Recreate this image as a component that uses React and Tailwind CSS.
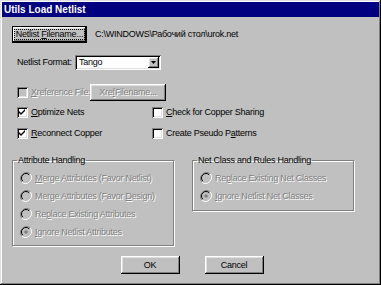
import React from 'react';

const raised = 'shadow-[inset_-1px_-1px_0_#000,inset_1px_1px_0_#fff,inset_-2px_-2px_0_#808080,inset_2px_2px_0_#dfdfdf]';
const sunken = 'shadow-[inset_1px_1px_0_#808080,inset_-1px_-1px_0_#fff,inset_2px_2px_0_#000,inset_-2px_-2px_0_#dfdfdf]';
const etched = 'text-[#808080] [text-shadow:1px_1px_0_#ffffff]';

const U = ({ children }) => <span className="underline underline-offset-[1px]">{children}</span>;

const CheckBox = ({ checked, disabled }) => (
    <span className={`w-[11px] h-[11px] shrink-0 flex items-center justify-center ${sunken} ${disabled ? 'bg-[#c0c0c0]' : 'bg-white'}`}>
        {checked && (
            <svg width="7" height="7" viewBox="0 0 7 7">
                <path d="M0 2 L2 4 L6 0 L6 2 L2 6 L0 4 Z" fill="#000" />
            </svg>
        )}
    </span>
);

const Radio = ({ checked }) => (
    <svg width="12" height="12" viewBox="0 0 12 12" className="shrink-0">
        <path d="M10.2 1.8 A6 6 0 0 0 1.8 10.2" fill="none" stroke="#808080" strokeWidth="1" />
        <path d="M1.8 10.2 A6 6 0 0 0 10.2 1.8" fill="none" stroke="#ffffff" strokeWidth="1" />
        <circle cx="6" cy="6" r="4.5" fill="#c0c0c0" />
        <path d="M9.2 2.8 A4.5 4.5 0 0 0 2.8 9.2" fill="none" stroke="#000" strokeWidth="1" />
        {checked && <circle cx="6" cy="6" r="1.8" fill="#808080" />}
    </svg>
);

const Button = ({ children, className = '', disabled }) => (
    <div className={`flex items-center justify-center bg-[#c0c0c0] ${raised} ${disabled ? etched : 'text-black'} ${className}`}>
        {children}
    </div>
);

const Group = ({ title, className = '', children }) => (
    <fieldset className={`border border-[#808080] shadow-[1px_1px_0_#fff,inset_1px_1px_0_#fff] ${className}`}>
        <legend className="ml-[4px] px-[1px] text-black leading-[10px]">{title}</legend>
        <div className="flex flex-col gap-[6px] pl-[7px] pt-[7px]">{children}</div>
    </fieldset>
);

const RadioRow = ({ checked, children }) => (
    <div className="flex items-center gap-[3px] h-[12px]">
        <Radio checked={checked} />
        <span className={etched}>{children}</span>
    </div>
);

export default function App() {
    return (
        <div className="w-[381px] h-[285px] bg-[#c0c0c0] p-[2px] text-[9px] tracking-[-0.25px] leading-none whitespace-nowrap shadow-[inset_-1px_-1px_0_#000,inset_1px_1px_0_#dfdfdf,inset_-2px_-2px_0_#808080,inset_2px_2px_0_#fff]" style={{ fontFamily: '"Liberation Sans", Arial, sans-serif' }}>
            <div className="h-[15px] bg-[#000080] text-white font-bold text-[10px] tracking-normal flex items-center pl-[2px]">Utils Load Netlist</div>

            <div className="px-[10px]">
                <div className="flex items-center mt-[9px] h-[17px]">
                    <div className="w-[75px] h-[17px] border border-black flex">
                        <Button className="flex-1">
                            <span className="outline outline-1 outline-dotted outline-black px-[1px]">Netlist <U>F</U>ilename...</span>
                        </Button>
                    </div>
                    <span className="ml-[8px]">C:\WINDOWS\Рабочий стол\urok.net</span>
                </div>

                <div className="flex items-center mt-[12px] h-[15px] pl-[5px]">
                    <span className="w-[58px]">Netlist Format:</span>
                    <div className={`w-[86px] h-[15px] bg-white ${sunken} flex items-center pl-[4px] pr-[2px]`}>
                        <span className="flex-1">Tango</span>
                        <Button className="w-[11px] h-[11px]">
                            <svg width="5" height="3" viewBox="0 0 5 3"><path d="M0 0 H5 L2.5 3 Z" fill="#000" /></svg>
                        </Button>
                    </div>
                </div>

                <div className="flex items-center mt-[14px] h-[17px] pl-[5px]">
                    <CheckBox disabled />
                    <span className={`ml-[3px] w-[59px] ${etched}`}><U>X</U>reference File:</span>
                    <Button disabled className="w-[76px] h-[17px]">Xre<U>f</U> Filename...</Button>
                </div>

                <div className="flex items-center mt-[6px] h-[11px] pl-[5px]">
                    <div className="flex items-center w-[135px]">
                        <CheckBox checked />
                        <span className="ml-[3px]"><U>O</U>ptimize Nets</span>
                    </div>
                    <CheckBox />
                    <span className="ml-[3px]"><U>C</U>heck for Copper Sharing</span>
                </div>

                <div className="flex items-center mt-[10px] h-[11px] pl-[5px]">
                    <div className="flex items-center w-[135px]">
                        <CheckBox checked />
                        <span className="ml-[3px]"><U>R</U>econnect Copper</span>
                    </div>
                    <CheckBox />
                    <span className="ml-[3px]">Create Pseudo P<U>a</U>tterns</span>
                </div>

                <div className="flex items-start mt-[16px]">
                    <Group title="Attribute Handling" className="w-[162px] h-[91px]">
                        <RadioRow><U>M</U>erge Attributes (Favor Netlist)</RadioRow>
                        <RadioRow>Merge Attributes (Favor <U>D</U>esign)</RadioRow>
                        <RadioRow>Re<U>p</U>lace Existing Attributes</RadioRow>
                        <RadioRow checked><U>I</U>gnore Netlist Attributes</RadioRow>
                    </Group>
                    <Group title="Net Class and Rules Handling" className="ml-[18px] w-[162px] h-[56px]">
                        <RadioRow>Re<U>p</U>lace Existing Net Classes</RadioRow>
                        <RadioRow checked><U>I</U>gnore Netlist Net Classes</RadioRow>
                    </Group>
                </div>

                <div className="flex justify-center gap-[25px] mt-[10px] pl-[3px]">
                    <Button className="w-[59px] h-[18px]">OK</Button>
                    <Button className="w-[59px] h-[18px]">Cancel</Button>
                </div>
            </div>
        </div>
    );
}
